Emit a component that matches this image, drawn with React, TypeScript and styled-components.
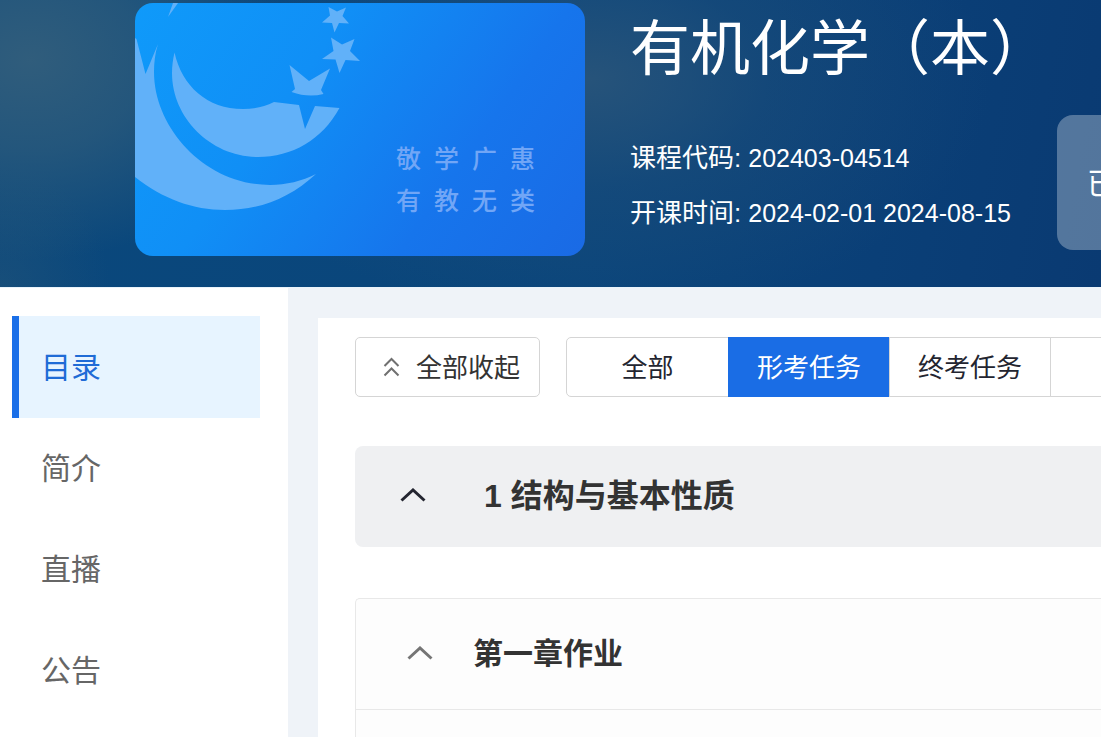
import React, { useState } from "react";
import styled, { createGlobalStyle } from "styled-components";

const GlobalStyle = createGlobalStyle`
  *, *::before, *::after { box-sizing: border-box; }
  body {
    margin: 0;
    background: #eff3f8;
    color: #333;
    font-family: "Liberation Sans", "Noto Sans CJK SC", sans-serif;
    font-weight: 400;
    overflow: hidden;
  }
  button { font: inherit; color: inherit; cursor: pointer; }
  h1, h2, h3, p, ul, dl, dd { margin: 0; padding: 0; }
`;

const Page = styled.div`
  display: flex;
  flex-direction: column;
  min-height: 100vh;
`;

const Banner = styled.header`
  display: flex;
  align-items: flex-start;
  height: 287px;
  padding: 3px 0 0 135px;
  overflow: hidden;
  color: #fff;
  background:
    radial-gradient(ellipse 260px 200px at 30px 60px, rgba(50, 94, 124, 0.95), rgba(46, 92, 124, 0.7) 45%, rgba(40, 88, 124, 0) 100%),
    radial-gradient(ellipse 110px 130px at 0 290px, rgba(40, 86, 120, 0.45), rgba(40, 86, 120, 0)),
    radial-gradient(ellipse 400px 240px at 590px 80px, rgba(40, 84, 122, 0.95), rgba(34, 80, 122, 0.4) 45%, rgba(30, 76, 122, 0) 100%),
    linear-gradient(100deg, #0a487c 0%, #0a457b 55%, #0a3f77 80%, #0a3a72 100%);
`;

const Cover = styled.div`
  position: relative;
  flex: none;
  width: 450px;
  height: 253px;
  border-radius: 18px;
  overflow: hidden;
  background: linear-gradient(125deg, #0f9afa 0%, #108ff6 35%, #1675ec 70%, #1a6ae5 100%);
`;

const CoverArt = styled.svg`
  display: block;
  fill: #61b1f9;
`;

const Motto = styled.div`
  position: absolute;
  right: 50px;
  top: 135px;
  color: #71a6f6;
  font-size: 25px;
  line-height: 42px;
  font-weight: 500;
`;

const MottoLine = styled.p`
  display: flex;
  gap: 13px;
`;

const CourseInfo = styled.div`
  flex: none;
  width: 427px;
  margin-left: 45px;
`;

const CourseTitle = styled.h1`
  padding-top: 3px;
  font-size: 60px;
  line-height: 88px;
  font-weight: 400;
  white-space: nowrap;
`;

const MetaList = styled.dl`
  margin-top: 37px;
`;

const MetaRow = styled.div`
  display: flex;
  align-items: baseline;
  gap: 7px;
  font-size: 26px;
  line-height: 55px;
  white-space: nowrap;
`;

const MetaValue = styled.dd`
  font-size: 25px;
`;

const StatusButton = styled.button`
  flex: none;
  width: 200px;
  height: 135px;
  margin-top: 112px;
  padding: 0 30px 4px;
  border: 0;
  border-radius: 16px;
  background: rgba(255, 255, 255, 0.3);
  color: #fff;
  font-size: 30px;
  text-align: left;
`;

const Body = styled.div`
  flex: 1;
  display: flex;
  border-top: 1px solid #e9f3fb;
`;

const Sidebar = styled.nav`
  flex: none;
  width: 288px;
  padding: 28px 28px 0 12px;
  background: #fff;
`;

const NavLink = styled.a<{ $active?: boolean }>`
  display: flex;
  align-items: center;
  height: 102px;
  margin-bottom: -1px;
  padding: 0 22px 4px;
  border-left: 7px solid ${(p) => (p.$active ? "#1a6fe8" : "transparent")};
  background: ${(p) => (p.$active ? "#e7f4ff" : "transparent")};
  color: ${(p) => (p.$active ? "#1f6bd6" : "#666")};
  font-size: 30px;
  text-decoration: none;
`;

const Main = styled.main`
  flex: 1;
  min-width: 0;
  display: flex;
  flex-direction: column;
  margin: 30px 0 0 30px;
  padding: 19px 0 0 37px;
  background: #fff;
  overflow: hidden;
`;

const Toolbar = styled.div`
  display: flex;
  gap: 26px;
`;

const CollapseButton = styled.button`
  flex: none;
  display: flex;
  align-items: center;
  justify-content: center;
  gap: 16px;
  width: 185px;
  height: 60px;
  padding: 0 0 0 8px;
  border: 1px solid #d5d5d5;
  border-radius: 5px;
  background: #fff;
  font-size: 26px;
`;

const ButtonLabel = styled.span`
  padding-bottom: 4px;
`;

const Segments = styled.div`
  display: flex;
`;

const Segment = styled.button<{ $active?: boolean }>`
  flex: none;
  width: 162px;
  height: 60px;
  padding: 0 0 4px;
  border: 1px solid ${(p) => (p.$active ? "#1a6de5" : "#d5d5d5")};
  background: ${(p) => (p.$active ? "#1a6de5" : "#fff")};
  color: ${(p) => (p.$active ? "#fff" : "#232530")};
  font-size: 26px;
  & + & { margin-left: -1px; }
  &:first-child { width: 163px; border-radius: 5px 0 0 5px; }
  &:last-child { border-radius: 0 5px 5px 0; }
`;

const ChapterHeader = styled.h2`
  margin-top: 49px;
  height: 101px;
  border-radius: 8px 0 0 8px;
  background: #eff0f2;
  font-size: 32px;
`;

const UnitCard = styled.section`
  flex: 1;
  margin-top: 51px;
  border: solid #e8e8e8;
  border-width: 1px 0 0 1px;
  border-radius: 5px 0 0 0;
  background: #fdfdfd;
`;

const UnitHeader = styled.h3`
  height: 111px;
  border-bottom: 1px solid #e8e8e8;
  font-size: 30px;
`;

const ToggleButton = styled.button<{ $indent: number; $gap: number }>`
  display: flex;
  align-items: center;
  gap: ${(p) => p.$gap}px;
  width: 100%;
  height: 100%;
  padding: 0 0 3px ${(p) => p.$indent}px;
  border: 0;
  background: none;
  font-weight: 700;
  white-space: nowrap;
`;

const Chevron = ({ color }: { color: string }) => (
  <svg width="26" height="14" viewBox="0 0 26 14" fill="none" stroke={color} strokeWidth="3" aria-hidden="true">
    <path d="M1.5 12.5 L13 2 L24.5 12.5" />
  </svg>
);

const DoubleChevron = () => (
  <svg width="17" height="20" viewBox="0 0 17 20" fill="none" stroke="#707070" strokeWidth="2" aria-hidden="true">
    <path d="M1.5 9 L8.5 2 L15.5 9 M1.5 18.5 L8.5 11.5 L15.5 18.5" />
  </svg>
);

const mottoLines = ["敬学广惠", "有教无类"];
const navItems = ["目录", "简介", "直播", "公告"];
const filters = ["全部", "形考任务", "终考任务"];

export default function App() {
  const [nav, setNav] = useState("目录");
  const [filter, setFilter] = useState("形考任务");

  return (
    <Page>
      <GlobalStyle />
      <Banner>
        <Cover>
          <CoverArt width="450" height="253" viewBox="0 0 450 253" aria-hidden="true">
            <path d="M0 35 L1.5 36 L10.5 71 L23 41 C20 50 19 60 19 69 C19 125 70 182 135 182 C151 182 167 178 181 171 C155 195 125 207 90 207 C58 207 28 196 0 174 Z" />
            <path d="M39.5 49.5 C47 83 72 106 108 106 C119 106 129 104 139 99 L164 102 L170 126 L180 103 L204.5 105 C187 137 157 154 123 154 C76 154 37 115 37 70 C37 63 38 56 39.5 49.5 Z" />
            <path d="M38 0 H43 L33 14 Z" />
            <path d="M154.5 62 L174 78 L195 65.5 L186 87 L188.5 91 Q173 95 156.5 89 L160 86 Z" />
            <path d="M196 34.5 L207 41.5 L219.5 36 L215 48 L225 58 L210.5 57 L204.5 70 L200.5 56.5 L187 56 L198.5 48 Z" />
            <path d="M193.5 4 L202 8.5 L211 4.5 L207.5 13 L214 20.5 L204 20 L199.5 29.5 L197 20 L187 19.5 L195 12.5 Z" />
          </CoverArt>
          <Motto>
            {mottoLines.map((line) => (
              <MottoLine key={line}>
                {line.split("").map((char) => (
                  <span key={char}>{char}</span>
                ))}
              </MottoLine>
            ))}
          </Motto>
        </Cover>
        <CourseInfo>
          <CourseTitle>有机化学（本）</CourseTitle>
          <MetaList>
            <MetaRow>
              <dt>课程代码:</dt>
              <MetaValue>202403-04514</MetaValue>
            </MetaRow>
            <MetaRow>
              <dt>开课时间:</dt>
              <MetaValue>2024-02-01 2024-08-15</MetaValue>
            </MetaRow>
          </MetaList>
        </CourseInfo>
        <StatusButton type="button">已</StatusButton>
      </Banner>

      <Body>
        <Sidebar>
          {navItems.map((item) => (
            <NavLink key={item} href="#" $active={nav === item} onClick={() => setNav(item)}>
              {item}
            </NavLink>
          ))}
        </Sidebar>

        <Main>
          <Toolbar>
            <CollapseButton type="button">
              <DoubleChevron />
              <ButtonLabel>全部收起</ButtonLabel>
            </CollapseButton>
            <Segments>
              {filters.map((item) => (
                <Segment key={item} type="button" $active={filter === item} onClick={() => setFilter(item)}>
                  {item}
                </Segment>
              ))}
              <Segment type="button" aria-label="其他" />
            </Segments>
          </Toolbar>

          <ChapterHeader>
            <ToggleButton type="button" $indent={45} $gap={58}>
              <Chevron color="#232530" />
              <ButtonLabel>1 结构与基本性质</ButtonLabel>
            </ToggleButton>
          </ChapterHeader>

          <UnitCard>
            <UnitHeader>
              <ToggleButton type="button" $indent={51} $gap={40}>
                <Chevron color="#757575" />
                <ButtonLabel>第一章作业</ButtonLabel>
              </ToggleButton>
            </UnitHeader>
          </UnitCard>
        </Main>
      </Body>
    </Page>
  );
}
